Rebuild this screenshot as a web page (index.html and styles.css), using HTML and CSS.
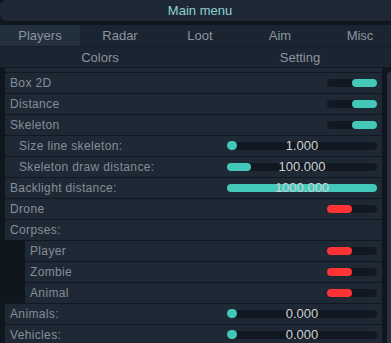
FILE: index.html
```html
<!DOCTYPE html>
<html lang="en">

<head>
    <meta charset="utf-8">
    <meta name="viewport" content="width=device-width, initial-scale=1.0">
    <title>Main menu</title>
    <link rel="stylesheet" href="styles.css">
</head>

<body>
    <div class="menu">
        <header class="titlebar">Main menu</header>

        <nav class="tabs">
            <button class="tab valgt">Players</button>
            <button class="tab">Radar</button>
            <button class="tab">Loot</button>
            <button class="tab">Aim</button>
            <button class="tab">Misc</button>
        </nav>
        <nav class="subtabs">
            <button class="tab">Colors</button>
            <button class="tab">Setting</button>
        </nav>

        <section class="content">
            <div class="list">
                <div class="topstrip"></div>

                <div class="row"><span>Box 2D</span><span class="toggle on"><i></i></span></div>
                <div class="row"><span>Distance</span><span class="toggle on"><i></i></span></div>
                <div class="row"><span>Skeleton</span><span class="toggle on"><i></i></span></div>
                <div class="row sub">
                    <span>Size line skeleton:</span>
                    <span class="slider"><i class="fill knob"></i><b>1.000</b></span>
                </div>
                <div class="row sub">
                    <span>Skeleton draw distance:</span>
                    <span class="slider"><i class="fill" style="width: 24px"></i><b>100.000</b></span>
                </div>
                <div class="row">
                    <span>Backlight distance:</span>
                    <span class="slider"><i class="fill" style="width: 150px"></i><b>1000.000</b></span>
                </div>
                <div class="row"><span>Drone</span><span class="toggle off"><i></i></span></div>
                <div class="row"><span>Corpses:</span></div>
                <div class="row nested"><span>Player</span><span class="toggle off"><i></i></span></div>
                <div class="row nested"><span>Zombie</span><span class="toggle off"><i></i></span></div>
                <div class="row nested"><span>Animal</span><span class="toggle off"><i></i></span></div>
                <div class="row">
                    <span>Animals:</span>
                    <span class="slider"><i class="fill knob"></i><b>0.000</b></span>
                </div>
                <div class="row">
                    <span>Vehicles:</span>
                    <span class="slider"><i class="fill knob"></i><b>0.000</b></span>
                </div>
            </div>
            <div class="scrollbar"><div class="thumb"></div></div>
        </section>
    </div>
</body>

</html>
```

FILE: styles.css
```css
/* ---- base ---- */

body {
    margin: 0;
    background-color: #0f161e;
    overflow: hidden;
    font-family: "Liberation Sans", Arial, sans-serif;
}

.menu {
    width: 400px;
    height: 343px;
    overflow: hidden;
}

/* ---- titel ---- */

.titlebar {
    height: 21px;
    line-height: 21px;
    background-color: #1e2834;
    border-radius: 6px;
    text-align: center;
    font-size: 13px;
    color: #8fd2d2;
    margin-bottom: 4px;
}

/* ---- faner ---- */

.tabs,
.subtabs {
    display: grid;
    background-color: #1b2531;
}

.tabs {
    grid-template-columns: repeat(5, 80px);
    height: 21px;
}

.subtabs {
    grid-template-columns: repeat(2, 200px);
    height: 20px;
    border-top: 1px solid #141c25;
}

.tab {
    font-family: inherit;
    font-size: 13px;
    color: #8a949e;
    background: none;
    border: none;
    padding: 0;
    margin: 0;
}

.tab.valgt {
    background-color: #222f3d;
}

/* ---- indhold ---- */

.content {
    display: flex;
    border-top: 1px solid #111820;
    height: 275px;
}

.list {
    width: 377px;
    flex-shrink: 0;
    margin-left: 5px;
}

.topstrip {
    height: 4px;
    background-color: #1f2935;
}

.row {
    display: flex;
    align-items: center;
    height: 20px;
    border-top: 1px solid #111820;
    background-color: #1f2935;
    padding: 0 5px 0 5px;
    font-size: 12px;
    letter-spacing: 0.35px;
    color: #848e98;
}

.row.sub {
    padding-left: 14px;
}

.row.nested {
    margin-left: 20px;
}

/* ---- kontakter ---- */

.toggle {
    margin-left: auto;
    width: 50px;
    height: 8px;
    border-radius: 4px;
    background-color: #111821;
    display: flex;
}

.toggle i {
    width: 25px;
    height: 8px;
    border-radius: 4px;
}

.toggle.on {
    justify-content: flex-end;
}

.toggle.on i {
    background-color: #44c8b9;
}

.toggle.off i {
    background-color: #ff3333;
}

/* ---- slidere ---- */

.slider {
    margin-left: auto;
    width: 150px;
    height: 8px;
    border-radius: 4px;
    background-color: #111821;
    display: grid;
}

.slider .fill,
.slider b {
    grid-area: 1 / 1;
}

.slider .fill {
    height: 8px;
    border-radius: 4px;
    background-color: #44c8b9;
}

.slider .knob {
    width: 10px;
    height: 9px;
    border-radius: 5px;
    margin-top: -1px;
}

.slider b {
    font-weight: normal;
    font-size: 13px;
    line-height: 8px;
    letter-spacing: 0;
    text-align: center;
    color: #cfd3d6;
}

/* ---- scrollbar ---- */

.scrollbar {
    box-sizing: border-box;
    width: 18px;
    flex-shrink: 0;
    padding-left: 5px;
    padding-top: 4px;
}

.thumb {
    height: 290px;
    background-color: #283342;
    border-radius: 4px 0 0 0;
}
```
